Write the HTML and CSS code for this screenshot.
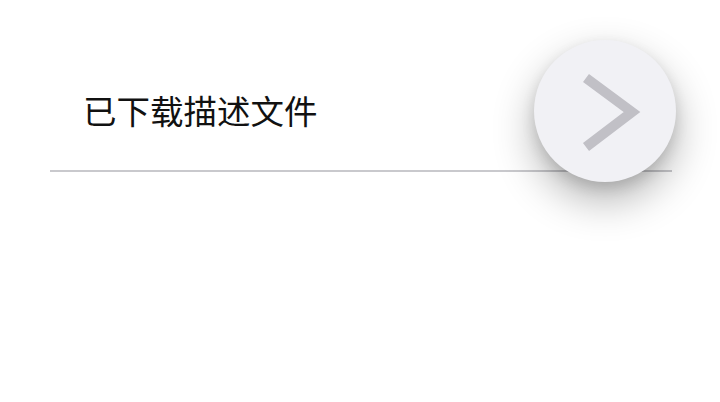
FILE: index.html
```html
<!DOCTYPE html>
<html>
<head>
<meta charset="utf-8">
<link rel="stylesheet" href="styles.css">
</head>
<body>
<div class="page">
  <div class="row">
    <span class="label">已下载描述文件</span>
  </div>
  <div class="fab">
    <svg width="142" height="142" viewBox="0 0 142 142">
      <polyline points="52,38 98,72 52,107" fill="none" stroke="#c1c0c6" stroke-width="10"/>
    </svg>
  </div>
</div>
</body>
</html>
```
FILE: styles.css
```css
html, body {
  margin: 0;
  padding: 0;
  background: #fff;
}
.page {
  position: relative;
  width: 720px;
  height: 402px;
  overflow: hidden;
}
.row {
  margin: 0 48px 0 50px;
  height: 172px;
  border-bottom: 2px solid #c9c9cd;
  box-sizing: border-box;
  display: flex;
  align-items: flex-start;
  padding: 88px 0 0 33px;
}
.label {
  font-family: "Noto Sans CJK SC", sans-serif;
  font-size: 33.5px;
  line-height: 44px;
  color: #111;
}
.fab {
  position: absolute;
  left: 534px;
  top: 40px;
  width: 142px;
  height: 142px;
  border-radius: 50%;
  background: #f1f1f5;
  box-shadow: 0 18px 42px rgba(0,0,0,0.3), 0 6px 14px rgba(0,0,0,0.12);
}
.fab svg {
  display: block;
}
```
